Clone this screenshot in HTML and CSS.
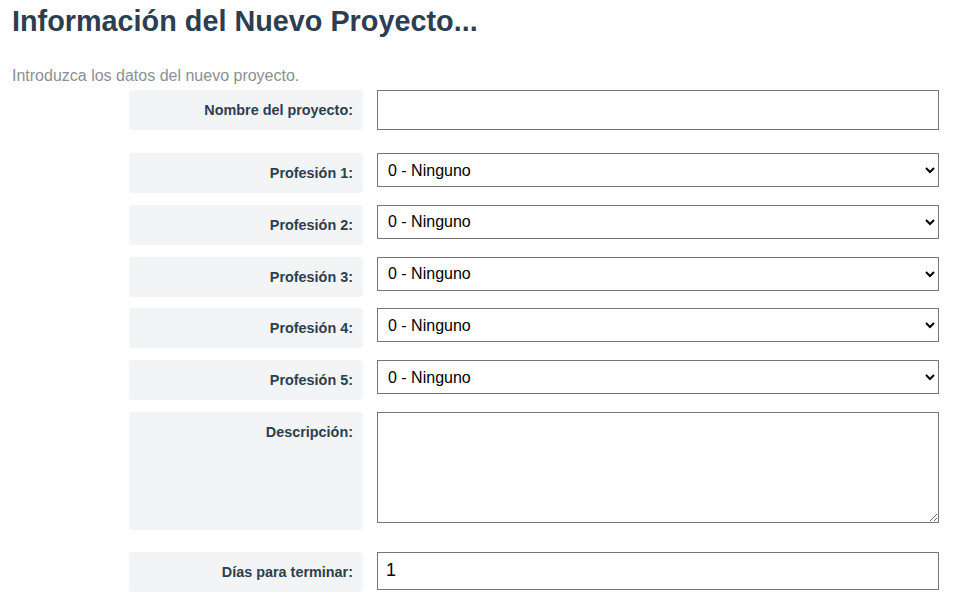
FILE: index.html
```html
<!DOCTYPE html>
<html lang="es">
<head>
<meta charset="utf-8">
<title>Nuevo Proyecto</title>
<link rel="stylesheet" href="styles.css">
</head>
<body>
<div class="page">
  <h1 class="title">Información del Nuevo Proyecto...</h1>
  <p class="subtitle">Introduzca los datos del nuevo proyecto.</p>
  <form class="form">
    <div class="row row-first">
      <label class="label" for="nombre">Nombre del proyecto:</label>
      <input class="field field-text" id="nombre" type="text">
    </div>
    <div class="row">
      <label class="label" for="p1">Profesión 1:</label>
      <select class="field field-select" id="p1"><option>0 - Ninguno</option></select>
    </div>
    <div class="row">
      <label class="label" for="p2">Profesión 2:</label>
      <select class="field field-select" id="p2"><option>0 - Ninguno</option></select>
    </div>
    <div class="row">
      <label class="label" for="p3">Profesión 3:</label>
      <select class="field field-select" id="p3"><option>0 - Ninguno</option></select>
    </div>
    <div class="row">
      <label class="label" for="p4">Profesión 4:</label>
      <select class="field field-select" id="p4"><option>0 - Ninguno</option></select>
    </div>
    <div class="row">
      <label class="label" for="p5">Profesión 5:</label>
      <select class="field field-select" id="p5"><option>0 - Ninguno</option></select>
    </div>
    <div class="row row-desc">
      <label class="label label-top" for="desc">Descripción:</label>
      <textarea class="field field-area" id="desc"></textarea>
    </div>
    <div class="row">
      <label class="label" for="dias">Días para terminar:</label>
      <input class="field field-num" id="dias" type="text" value="1">
    </div>
  </form>
</div>
</body>
</html>
```

FILE: styles.css
```css
html, body {
  margin: 0;
  padding: 0;
  background: #ffffff;
}

body {
  font-family: "Liberation Sans", Arial, sans-serif;
  color: #2c3e50;
}

.page {
  padding: 0 12px;
}

.title {
  margin: 0;
  padding-top: 5px;
  font-size: 28.8px;
  line-height: 33px;
  font-weight: 700;
  color: #2c3e50;
}

.subtitle {
  margin: 28px 0 0;
  font-size: 16px;
  line-height: 20px;
  color: #8a8f94;
}

.form {
  margin-top: 4px;
  padding-left: 117px;
  display: flex;
  flex-direction: column;
  gap: 11.75px;
}

.row {
  display: grid;
  grid-template-columns: 234px 562px;
  column-gap: 14px;
  align-items: start;
}

.row-first {
  margin-bottom: 11.25px;
}

.row-desc {
  margin-bottom: 10px;
}

.label {
  box-sizing: border-box;
  background: #f3f4f6;
  border-radius: 4px;
  height: 40px;
  display: flex;
  align-items: center;
  justify-content: flex-end;
  padding-right: 10px;
  font-size: 14.4px;
  font-weight: 700;
  color: #2c3e50;
}

.label-top {
  height: 118px;
  align-items: flex-start;
  padding-top: 12px;
}

.field {
  box-sizing: border-box;
  width: 562px;
  margin: 0;
  border: 1px solid #767676;
  border-radius: 0;
  background: #ffffff;
  font-family: "Liberation Sans", Arial, sans-serif;
  color: #000000;
}

.field-text {
  height: 40px;
  padding: 0 8px;
  font-size: 16px;
}

.field-select {
  height: 34px;
  padding: 0 6px;
  font-size: 16px;
}

.field-area {
  height: 111px;
  padding: 8px;
  font-size: 16px;
  resize: both;
  display: block;
}

.field-num {
  height: 38px;
  padding: 0 8px;
  font-size: 18px;
}
```
